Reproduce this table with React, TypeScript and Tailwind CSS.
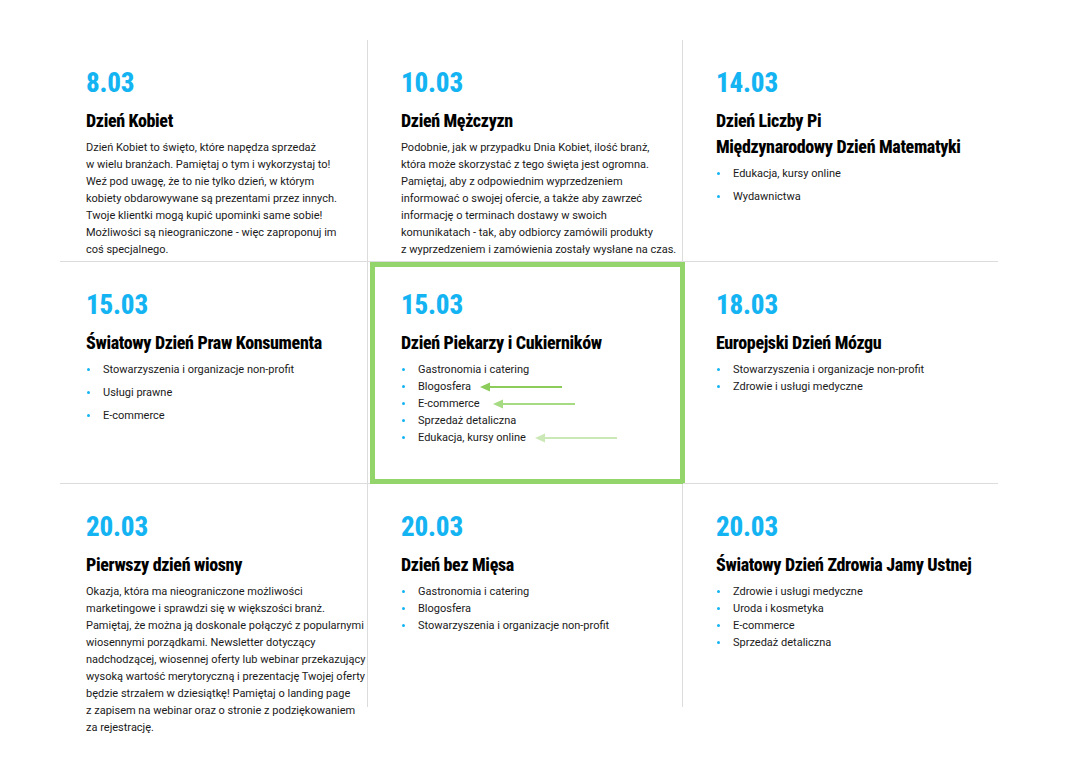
import React from "react";

type Cell = {
  date: string;
  title: string[];
  body?: string[];
  items?: string[];
  spaced?: boolean;
  highlight?: boolean;
  pl: string;
};

const cells: Cell[] = [
  {
    date: "8.03",
    title: ["Dzień Kobiet"],
    body: [
      "Dzień Kobiet to święto, które napędza sprzedaż",
      "w wielu branżach. Pamiętaj o tym i wykorzystaj to!",
      "Weź pod uwagę, że to nie tylko dzień, w którym",
      "kobiety obdarowywane są prezentami przez innych.",
      "Twoje klientki mogą kupić upominki same sobie!",
      "Możliwości są nieograniczone - więc zaproponuj im",
      "coś specjalnego.",
    ],
    pl: "pl-[26px]",
  },
  {
    date: "10.03",
    title: ["Dzień Mężczyzn"],
    body: [
      "Podobnie, jak w przypadku Dnia Kobiet, ilość branż,",
      "która może skorzystać z tego święta jest ogromna.",
      "Pamiętaj, aby z odpowiednim wyprzedzeniem",
      "informować o swojej ofercie, a także aby zawrzeć",
      "informację o terminach dostawy w swoich",
      "komunikatach - tak, aby odbiorcy zamówili produkty",
      "z wyprzedzeniem i zamówienia zostały wysłane na czas.",
    ],
    pl: "pl-[33px]",
  },
  {
    date: "14.03",
    title: ["Dzień Liczby Pi", "Międzynarodowy Dzień Matematyki"],
    items: ["Edukacja, kursy online", "Wydawnictwa"],
    spaced: true,
    pl: "pl-[33px]",
  },
  {
    date: "15.03",
    title: ["Światowy Dzień Praw Konsumenta"],
    items: ["Stowarzyszenia i organizacje non-profit", "Usługi prawne", "E-commerce"],
    spaced: true,
    pl: "pl-[26px]",
  },
  {
    date: "15.03",
    title: ["Dzień Piekarzy i Cukierników"],
    items: ["Gastronomia i catering", "Blogosfera", "E-commerce", "Sprzedaż detaliczna", "Edukacja, kursy online"],
    highlight: true,
    pl: "pl-[33px]",
  },
  {
    date: "18.03",
    title: ["Europejski Dzień Mózgu"],
    items: ["Stowarzyszenia i organizacje non-profit", "Zdrowie i usługi medyczne"],
    pl: "pl-[33px]",
  },
  {
    date: "20.03",
    title: ["Pierwszy dzień wiosny"],
    body: [
      "Okazja, która ma nieograniczone możliwości",
      "marketingowe i sprawdzi się w większości branż.",
      "Pamiętaj, że można ją doskonale połączyć z popularnymi",
      "wiosennymi porządkami. Newsletter dotyczący",
      "nadchodzącej, wiosennej oferty lub webinar przekazujący",
      "wysoką wartość merytoryczną i prezentację Twojej oferty",
      "będzie strzałem w dziesiątkę! Pamiętaj o landing page",
      "z zapisem na webinar oraz o stronie z podziękowaniem",
      "za rejestrację.",
    ],
    pl: "pl-[26px]",
  },
  {
    date: "20.03",
    title: ["Dzień bez Mięsa"],
    items: ["Gastronomia i catering", "Blogosfera", "Stowarzyszenia i organizacje non-profit"],
    pl: "pl-[33px]",
  },
  {
    date: "20.03",
    title: ["Światowy Dzień Zdrowia Jamy Ustnej"],
    items: ["Zdrowie i usługi medyczne", "Uroda i kosmetyka", "E-commerce", "Sprzedaż detaliczna"],
    pl: "pl-[33px]",
  },
];

const arrowColors: Record<string, { color: string; ml: string }> = {
  Blogosfera: { color: "#8ccc5a", ml: "ml-[9px]" },
  "E-commerce": { color: "#a6da83", ml: "ml-[13px]" },
  "Edukacja, kursy online": { color: "#cbe9b6", ml: "ml-[9px]" },
};

function Arrow({ color }: { color: string }) {
  return (
    <svg width="82" height="10" viewBox="0 0 82 10" className="inline-block align-middle">
      <line x1="6" y1="5" x2="82" y2="5" stroke={color} strokeWidth="1.8" />
      <polygon points="0,5 10,0.5 10,9.5" fill={color} />
    </svg>
  );
}

export default function App() {
  return (
    <div className="w-[1070px] h-[761px] bg-white font-['Roboto',sans-serif] text-[#1a1a1a]">
      <div className="ml-[60px] pt-[40px] w-[938px] grid grid-cols-[308px_315px_315px] grid-rows-[222px_222px_223px]">
        {cells.map((c, i) => {
          const col = i % 3;
          const row = Math.floor(i / 3);
          const br = col < 2 ? "border-r border-r-[#dcdcdc]" : "";
          const bb = row < 2 ? "border-b border-b-[#dcdcdc]" : "";
          return (
            <div key={i} className={`relative ${br} ${bb} ${c.pl} pt-[26px]`}>
              {c.highlight && (
                <div className="absolute left-[2px] -right-[3px] top-0 -bottom-[1px] border-[5px] border-[#93d56b] pointer-events-none" />
              )}
              <div className="text-[27px] leading-[34px] font-extrabold text-[#14b4f3] [font-stretch:75%] tracking-[-0.2px]">
                {c.date}
              </div>
              <div className="mt-[8px] text-[18px] leading-[26px] font-extrabold text-black [font-stretch:75%] tracking-[-0.35px]">
                {c.title.map((t, k) => (
                  <div key={k}>{t}</div>
                ))}
              </div>
              {c.body && (
                <div className="mt-[5px] text-[11px] leading-[17px] tracking-[0px] whitespace-nowrap">
                  {c.body.map((l, k) => (
                    <div key={k}>{l}</div>
                  ))}
                </div>
              )}
              {c.items && (
                <ul className={`mt-[5px] flex flex-col ${c.spaced ? "gap-[6px]" : ""} text-[11px] leading-[17px] tracking-[0px]`}>
                  {c.items.map((it, k) => (
                    <li key={k} className="flex items-center whitespace-nowrap">
                      <span className="w-[3px] h-[3px] rounded-full bg-[#14b4f3] ml-[1px] mr-[13px]" />
                      <span>{it}</span>
                      {c.highlight && arrowColors[it] && (
                        <span className={`${arrowColors[it].ml} flex items-center`}>
                          <Arrow color={arrowColors[it].color} />
                        </span>
                      )}
                    </li>
                  ))}
                </ul>
              )}
            </div>
          );
        })}
      </div>
    </div>
  );
}
